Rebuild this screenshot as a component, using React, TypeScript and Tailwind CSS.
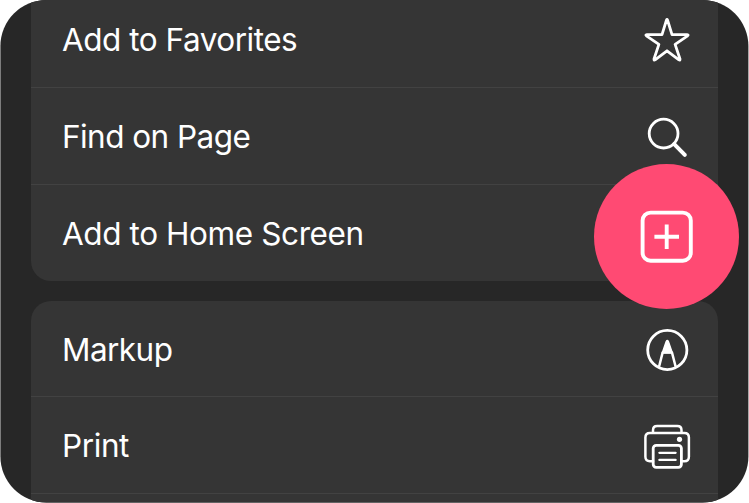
import type { ReactNode } from "react";

function Row({ label, tracking, height, icon, divider = true }: {
  label: string;
  tracking: string;
  height: string;
  icon?: ReactNode;
  divider?: boolean;
}) {
  return (
    <div className={`flex shrink-0 items-center justify-between pl-[31px] pr-[25px] ${height} ${divider ? "border-b border-[#424242]" : ""}`}>
      <span className={`whitespace-nowrap text-[31.5px] leading-10 text-white ${tracking}`}>{label}</span>
      {icon}
    </div>
  );
}

const line = {
  fill: "none",
  stroke: "white",
  strokeWidth: 2.8,
  strokeLinecap: "round" as const,
  strokeLinejoin: "round" as const,
};

function StarIcon() {
  return (
    <svg className="h-[52px] w-[52px]" viewBox="0 0 52 52" {...line}>
      <path d="M25.5 6Q26 4.8 26.5 6L31 20.6H46.2Q47.8 20.7 46.6 21.8L34.1 30.4L39 45Q39.2 46.6 37.9 45.8L26 36.8L14.1 45.8Q12.8 46.6 13 45L17.9 30.4L5.4 21.8Q4.2 20.7 5.8 20.6H21Z" />
    </svg>
  );
}

function SearchIcon() {
  return (
    <svg className="h-[52px] w-[52px]" viewBox="0 0 52 52" {...line}>
      <circle cx="22.6" cy="22.6" r="14.4" />
      <path d="M33.2 33.2L43.8 43.8" strokeWidth="4" />
    </svg>
  );
}

function MarkupIcon() {
  return (
    <svg className="h-[52px] w-[52px]" viewBox="0 0 52 52" {...line}>
      <circle cx="26.3" cy="26" r="19.6" />
      <path d="M18.1 42.5L21.6 28.6H31L34.6 42.5" strokeWidth="2.5" />
      <path d="M21.5 28.6L25.3 17.5Q26.3 15.5 27.3 17.5L31.1 28.6Z" fill="white" strokeWidth="1.6" />
    </svg>
  );
}

function PrintIcon() {
  return (
    <svg className="h-[52px] w-[52px]" viewBox="0 0 52 52" {...line}>
      <path d="M12 12.7V10.3Q12 6.1 16.2 6.1H36.3Q40.5 6.1 40.5 10.3V12.7" strokeWidth="2.5" />
      <path d="M12 41.3H8.9Q4.4 41.3 4.4 36.8V17.6Q4.4 13 8.9 13H43.4Q47.9 13 47.9 17.6V36.8Q47.9 41.3 43.4 41.3H40.5" strokeWidth="2.5" />
      <rect x="12.2" y="25.3" width="28.2" height="22" rx="3" />
      <path d="M18.4 32.8H34.6M18.4 39.9H34.6" strokeWidth="2.3" />
      <circle cx="38.5" cy="19.3" r="2.6" fill="white" stroke="none" />
    </svg>
  );
}

export default function App() {
  return (
    <div className="h-[503px] w-[749px] bg-white">
      <main className="relative flex h-full w-full flex-col gap-5 overflow-hidden bg-[#272727] px-[31px] font-['Inter',sans-serif] [clip-path:inset(0_0.6px_0.6px_0.4px_round_46px)]">
        <section className="-mt-[7px] flex shrink-0 flex-col rounded-b-[20px] bg-[#353535]">
          <Row label="Add to Favorites" tracking="tracking-[-0.48px]" height="h-[95px] pb-px" icon={<StarIcon />} />
          <Row label="Find on Page" tracking="tracking-[-0.55px]" height="h-[97px] pt-0.5" icon={<SearchIcon />} />
          <Row label="Add to Home Screen" tracking="tracking-[-0.4px]" height="h-[96px] pt-0.5" divider={false} />
        </section>
        <section className="flex shrink-0 flex-col rounded-t-[20px] bg-[#353535]">
          <Row label="Markup" tracking="tracking-[-0.55px]" height="h-[96px] pt-0.5" icon={<MarkupIcon />} />
          <Row label="Print" tracking="tracking-[-0.4px]" height="h-[97px] pt-0.5" icon={<PrintIcon />} />
          <div className="h-5" />
        </section>
        <div className="absolute left-[594px] top-[164px] flex h-[145px] w-[145px] items-center justify-center rounded-full bg-[#ff4a73]">
          <svg className="h-[54px] w-[54px]" viewBox="0 0 54 54" fill="none" stroke="white">
            <rect x="2.6" y="2.6" width="48.2" height="48.2" rx="8" strokeWidth="3.9" />
            <path d="M26.7 14.4V39M14.4 26.7H39" strokeWidth="3.9" />
          </svg>
        </div>
      </main>
    </div>
  );
}
